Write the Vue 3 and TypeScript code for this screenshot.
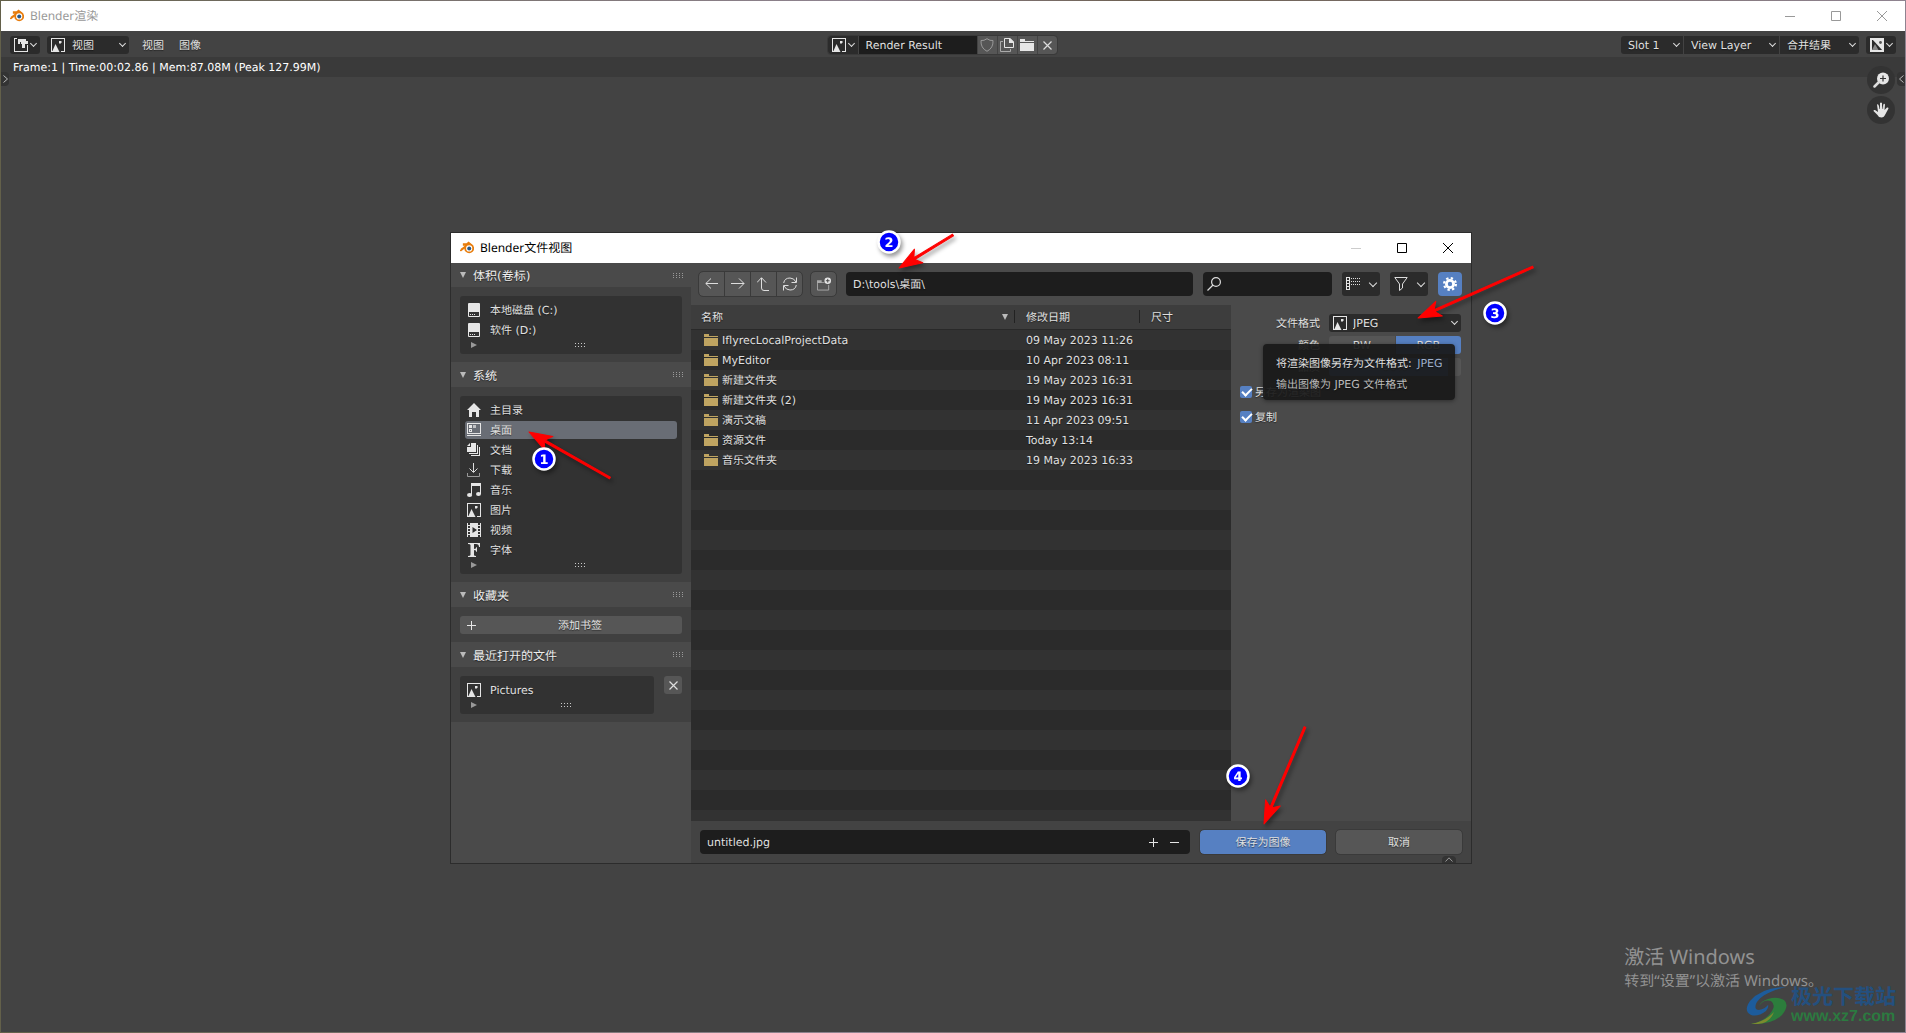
<script setup lang="ts">
import { ref } from 'vue'

const icons: Record<string, string> = {
  blender:
    '<path d="M1 8.6L7 4H3.6V3H8.4L7.6 2.2L8.6 1.4L13 5.2" fill="none" stroke="#e87d0d" stroke-width="1.5"/><path d="M.4 9.8L5 6.4" stroke="#e87d0d" stroke-width="1.6"/><circle cx="9.2" cy="7.4" r="4" fill="#fff" stroke="#e87d0d" stroke-width="1.8"/><circle cx="9.2" cy="7.4" r="2" fill="#265787"/>',
  image:
    '<path d="M0 0H14V14H10V13H13V1H1V13H2V14H0Z"/><path d="M1 14L4.5 6L8.5 14Z"/><path d="M8 3H10L11 4L9 6L8 5Z"/>',
  editor:
    '<path d="M0 0H3V1H1V13H13V7H14V14H0Z"/><path d="M4 1H12V3H14V6H11V10H8V6H7V4H6V6H4Z"/>',
  alpha:
    '<path d="M1 1H13V13H1Z" fill="none" stroke="#e6e6e6" stroke-width="2"/><path d="M2 1H13V13Z"/><path d="M2 12L5 6L8.500 12Z" fill="#888"/><circle cx="10.500" cy="4.500" r="1.400" fill="#555"/>',
  drive:
    '<path fill-rule="evenodd" d="M2 0H12Q13 0 13 1V13Q13 14 12 14H2Q1 14 1 13V1Q1 0 2 0ZM2 9V13H12V9Z"/><path d="M3 11H4V12H3ZM5 11H6V12H5ZM7 11H8V12H7Z"/>',
  home: '<path d="M7 0L14 7H12V14H9V9H5V14H2V7H0Z"/>',
  desktop:
    '<path fill-rule="evenodd" d="M0 0H14V11H0ZM1 1V10H13V1Z"/><path d="M0 12H14V13H0ZM2 2H5V5H2Z"/><path d="M6 2H9V5H6Z" opacity=".7"/><path fill-rule="evenodd" d="M2 6H5V9H2ZM3 7V8H4V7Z"/>',
  docs: '<path d="M4 0H9V9H0V4H4ZM3 0V3H0Z"/><path d="M10 2H11V11H2V10H10ZM12 4H13V13H4V12H12Z"/>',
  download:
    '<path d="M6.500 0V9M2.500 5.500L6.500 9.500L10.500 5.500" fill="none" stroke="#ddd"/><path d="M.5 10V13.500H12.500V10" fill="none" stroke="#999"/>',
  music:
    '<path d="M4 0H14V11H13V3H5V11H4Z"/><ellipse cx="2.600" cy="12" rx="2.600" ry="2"/><ellipse cx="11.500" cy="11" rx="2.500" ry="2"/>',
  video:
    '<path fill-rule="evenodd" d="M3 0H11V14H3ZM5.500 4V10L10 7Z"/><path d="M0 0H1V14H0ZM13 0H14V14H13ZM1 2H3V3H1ZM1 5H3V6H1ZM1 8H3V9H1ZM1 11H3V12H1ZM11 2H13V3H11ZM11 5H13V6H11ZM11 8H13V9H11ZM11 11H13V12H11Z"/>',
  font: '<path d="M1 0H13V4H12Q12 1 9 1H7V6Q9.500 6 9.500 4H10V9H9.500Q9.500 7 7 7V12Q7 13 9 13V14H1V13Q3.500 13 3.500 12V2Q3.500 1 1 1Z"/>',
  plus: '<path d="M4 0H5V4H9V5H5V9H4V5H0V4H4Z"/>',
  minus: '<path d="M0 4H9V5H0Z"/>',
  cross: '<path d="M.5 .5L8.500 8.500M8.500 .5L.5 8.500" fill="none" stroke="#ddd" stroke-width="1.200"/>',
  shield: '<path d="M7 .7Q10 3 13 2.500Q13.500 10 7 13.300Q.5 10 1 2.500Q4 3 7 .7Z" fill="none" stroke="#999"/>',
  copy: '<path d="M3 3.500H.5V13.500H10.500V11" fill="none" stroke="#aaa"/><path d="M4.500 .5H10L13.500 4V9.500H4.500Z" fill="none" stroke="#e6e6e6"/><path d="M9 0H10L14 4V5H9Z"/>',
  folder: '<path d="M0 1H5V3H14V4H0ZM0 5H14V13H0Z"/>',
  back: '<path d="M13 6.500H.8M6 1.500L.8 6.500L6 11.500" fill="none" stroke="#ddd"/>',
  forward: '<path d="M0 6.500H13M8 1.500L13 6.500L8 11.500" fill="none" stroke="#ddd"/>',
  up: '<path d="M4.500 1V11Q4.500 13.500 7 13.500H12M0 5.500L4.500 .7L9 5.500" fill="none" stroke="#ddd"/>',
  refresh:
    '<path d="M.7 6Q1.500 1 7 1Q11 1 13 5M13.500 .5V5.500H8.500M13.300 8Q12.500 13 7 13Q3 13 1 9M.5 13.500V8.500H5.500" fill="none" stroke="#ddd"/>',
  newfolder:
    '<path d="M0 3H5V5H8V6H0Z" fill="#aaa"/><path d="M.5 6V13.500H12.500V8" fill="none" stroke="#aaa"/><circle cx="11.500" cy="3.500" r="3.500"/><path d="M11.500 1.500V5.500M9.500 3.500H13.500" stroke="#444"/>',
  search: '<circle cx="9" cy="5" r="4.400" fill="none" stroke="#ddd" stroke-width="1.200"/><path d="M6 8L.5 13.500" stroke="#ddd" stroke-width="1.200"/>',
  list: '<path fill-rule="evenodd" d="M0 0H4V13H0ZM1 1V3H3V1ZM1 4V6H3V4ZM1 7V9H3V7ZM1 10V12H3V10Z"/><path d="M5 1.500H14M5 4.500H14M5 7.500H14" stroke="#ddd" stroke-dasharray="1 1"/>',
  filter: '<path d="M.8 .5H13.200L8.500 7V11L5.500 13.500V7Z" fill="none" stroke="#ddd"/>',
  gear: '<circle cx="7" cy="7" r="3.600" fill="none" stroke="#fff" stroke-width="2.800"/><circle cx="7" cy="7" r="5.900" fill="none" stroke="#fff" stroke-width="2.200" stroke-dasharray="2.320 2.320"/>',
  zoom: '<circle cx="10" cy="6.500" r="6"/><path d="M6 10L1.500 14.500" stroke="#ddd" stroke-width="2.500" stroke-linecap="round"/><path d="M10 3.500V9.500M7 6.500H13" stroke="#333" stroke-width="1.200"/>',
  hand: '<path d="M4 2.500Q5 2 5.500 3L7 7V1Q8 0 9 1V7L10.500 2Q11.500 1.500 12 2.500L11.500 8L14 5.500Q15.500 5 15.500 6.500L12.500 12Q11 15.500 8.500 15.500Q5.500 15.500 4.500 13L.5 9Q.5 7.500 2 8L5 10Z"/><path d="M6.500 2V7M9.700 2V7" stroke="#333" stroke-width=".5"/>',
}

const drives = ['本地磁盘 (C:)', '软件 (D:)']
const places = [
  { icon: 'home', name: '主目录' },
  { icon: 'desktop', name: '桌面' },
  { icon: 'docs', name: '文档' },
  { icon: 'download', name: '下载' },
  { icon: 'music', name: '音乐' },
  { icon: 'image', name: '图片' },
  { icon: 'video', name: '视频' },
  { icon: 'font', name: '字体' },
]
const activePlace = ref('桌面')

const files = [
  { name: 'IflyrecLocalProjectData', date: '09 May 2023 11:26' },
  { name: 'MyEditor', date: '10 Apr 2023 08:11' },
  { name: '新建文件夹', date: '19 May 2023 16:31' },
  { name: '新建文件夹 (2)', date: '19 May 2023 16:31' },
  { name: '演示文稿', date: '11 Apr 2023 09:51' },
  { name: '资源文件', date: 'Today 13:14' },
  { name: '音乐文件夹', date: '19 May 2023 16:33' },
]

const nav = [
  { icon: 'back', label: '后退' },
  { icon: 'forward', label: '前进' },
  { icon: 'up', label: '上一级' },
  { icon: 'refresh', label: '刷新' },
]

const path = ref('D:\\tools\\桌面\\')
const query = ref('')
const filename = ref('untitled.jpg')
const renderName = ref('Render Result')
const saveAsRender = ref(true)
const saveCopy = ref(true)

interface Arrow { x: number; y: number; tx: number; ty: number }
const arrows: Arrow[] = [
  { x: 529, y: 432, tx: 610, ty: 478 },
  { x: 899, y: 268, tx: 953, ty: 235 },
  { x: 1418, y: 318, tx: 1533, ty: 267 },
  { x: 1264, y: 824, tx: 1305, ty: 727 },
]
const badges = [
  { n: 1, x: 544, y: 459 },
  { n: 2, x: 889, y: 242 },
  { n: 3, x: 1495, y: 313 },
  { n: 4, x: 1238, y: 776 },
]
function arrowTransform(a: Arrow): string {
  const angle = (Math.atan2(a.ty - a.y, a.tx - a.x) * 180) / Math.PI
  return `translate(${a.x} ${a.y}) rotate(${angle})`
}
function arrowPath(a: Arrow): string {
  const len = Math.hypot(a.tx - a.x, a.ty - a.y)
  return `M0 0L23 -8L18 -1L${len} -1V1L18 1L23 8Z`
}
</script>

<template>
  <div class="screen">
    <main class="render">
      <header class="titlebar">
        <svg class="ic" viewBox="0 0 14 14" v-html="icons.blender" />
        <span class="grow">Blender渲染</span>
        <button class="win" aria-label="最小化"><svg viewBox="0 0 10 10"><path d="M0 5.500H10" /></svg></button>
        <button class="win" aria-label="最大化"><svg viewBox="0 0 10 10"><path d="M.5 .5H9.500V9.500H.5Z" /></svg></button>
        <button class="win" aria-label="关闭"><svg viewBox="0 0 10 10"><path d="M0 0L10 10M10 0L0 10" /></svg></button>
      </header>

      <div class="menubar">
        <div class="left">
          <button class="dark pick" aria-label="编辑器类型">
            <svg class="ic" viewBox="0 0 14 14" v-html="icons.editor" /><i class="chev" />
          </button>
          <div class="dark mode">
            <svg class="ic" viewBox="0 0 14 14" v-html="icons.image" />
            <select aria-label="模式"><option>视图</option></select><i class="chev" />
          </div>
          <button class="plain">视图</button>
          <button class="plain">图像</button>
        </div>
        <div class="datablock">
          <button class="dark pick" aria-label="浏览图像">
            <svg class="ic" viewBox="0 0 14 14" v-html="icons.image" /><i class="chev" />
          </button>
          <input v-model="renderName" aria-label="图像名称" />
          <button v-for="i in ['shield', 'copy', 'folder']" :key="i" class="cell" :aria-label="i">
            <svg class="ic" viewBox="0 0 14 14" v-html="icons[i]" />
          </button>
          <button class="cell" aria-label="断开"><svg class="sm" viewBox="0 0 9 9" v-html="icons.cross" /></button>
        </div>
        <div class="right">
          <div class="dark slot"><select aria-label="槽"><option>Slot 1</option></select><i class="chev" /></div>
          <div class="dark layer"><select aria-label="视图层"><option>View Layer</option></select><i class="chev" /></div>
          <div class="dark pass"><select aria-label="通道"><option>合并结果</option></select><i class="chev" /></div>
          <button class="dark pick" aria-label="显示通道">
            <svg class="ic" viewBox="0 0 14 14" v-html="icons.alpha" /><i class="chev" />
          </button>
        </div>
      </div>
      <p class="stats">Frame:1 | Time:00:02.86 | Mem:87.08M (Peak 127.99M)</p>
      <button class="tab tab-left" aria-label="展开左侧"><svg viewBox="0 0 5 8"><path d="M.5 .5L4.500 4L.5 7.500" /></svg></button>
      <button class="tab tab-right" aria-label="展开右侧"><svg viewBox="0 0 5 8"><path d="M4.500 .5L.5 4L4.500 7.500" /></svg></button>
      <div class="gizmos">
        <button aria-label="缩放"><svg viewBox="0 0 16 16" v-html="icons.zoom" /></button>
        <button aria-label="平移"><svg viewBox="0 0 16 16" v-html="icons.hand" /></button>
      </div>
    </main>

    <section class="dialog">
      <header class="titlebar active">
        <svg class="ic" viewBox="0 0 14 14" v-html="icons.blender" />
        <span class="grow">Blender文件视图</span>
        <button class="win off" aria-label="最小化" disabled><svg viewBox="0 0 10 10"><path d="M0 5.500H10" /></svg></button>
        <button class="win" aria-label="最大化"><svg viewBox="0 0 10 10"><path d="M.5 .5H9.500V9.500H.5Z" /></svg></button>
        <button class="win" aria-label="关闭"><svg viewBox="0 0 10 10"><path d="M0 0L10 10M10 0L0 10" /></svg></button>
      </header>

      <div class="body">
        <aside class="sidebar">
          <h2><i class="tri" />体积(卷标)<i class="grip" /></h2>
          <div class="panel">
            <div class="box">
              <button v-for="d in drives" :key="d" class="item">
                <svg class="ic" viewBox="0 0 14 14" v-html="icons.drive" /><span>{{ d }}</span>
              </button>
              <div class="foot"><i class="play" /><i class="grip light" /></div>
            </div>
          </div>
          <h2><i class="tri" />系统<i class="grip" /></h2>
          <div class="panel">
            <div class="box">
              <button
                v-for="p in places"
                :key="p.name"
                class="item"
                :class="{ on: p.name === activePlace }"
                @click="activePlace = p.name"
              >
                <svg class="ic" viewBox="0 0 14 14" v-html="icons[p.icon]" /><span>{{ p.name }}</span>
              </button>
              <div class="foot"><i class="play" /><i class="grip light" /></div>
            </div>
          </div>
          <h2><i class="tri" />收藏夹<i class="grip" /></h2>
          <div class="panel">
            <button class="add"><svg class="sm" viewBox="0 0 9 9" v-html="icons.plus" /><span>添加书签</span></button>
          </div>
          <h2><i class="tri" />最近打开的文件<i class="grip" /></h2>
          <div class="panel recent">
            <div class="box">
              <button class="item"><svg class="ic" viewBox="0 0 14 14" v-html="icons.image" /><span>Pictures</span></button>
              <div class="foot"><i class="play" /><i class="grip light" /></div>
            </div>
            <button class="clear" aria-label="清除"><svg class="sm" viewBox="0 0 9 9" v-html="icons.cross" /></button>
          </div>
        </aside>

        <div class="content">
          <div class="toolbar">
            <div class="nav">
              <button v-for="b in nav" :key="b.icon" :aria-label="b.label">
                <svg class="ic" viewBox="0 0 14 14" v-html="icons[b.icon]" />
              </button>
            </div>
            <button class="new" aria-label="新建文件夹"><svg class="ic" viewBox="0 0 15 14" v-html="icons.newfolder" /></button>
            <input v-model="path" class="path" aria-label="路径" />
            <label class="search">
              <svg class="ic" viewBox="0 0 14 14" v-html="icons.search" />
              <input v-model="query" aria-label="搜索" />
            </label>
            <button class="dark opt" aria-label="显示模式"><svg class="ic" viewBox="0 0 14 14" v-html="icons.list" /><i class="chev big" /></button>
            <button class="dark opt" aria-label="过滤"><svg class="ic" viewBox="0 0 14 14" v-html="icons.filter" /><i class="chev big" /></button>
            <button class="gear" aria-label="选项"><svg class="ic" viewBox="0 0 14 14" v-html="icons.gear" /></button>
          </div>

          <div class="middle">
            <div class="files">
              <table>
                <colgroup><col /><col class="c-date" /><col class="c-size" /></colgroup>
                <thead>
                  <tr><th><span>名称</span><i class="tri" /></th><th>修改日期</th><th>尺寸</th></tr>
                </thead>
                <tbody>
                  <tr v-for="f in files" :key="f.name">
                    <td><svg class="ic folder" viewBox="0 0 14 14" v-html="icons.folder" />{{ f.name }}</td>
                    <td>{{ f.date }}</td>
                    <td></td>
                  </tr>
                </tbody>
              </table>
            </div>
            <div class="props">
              <div class="row">
                <label for="fmt">文件格式</label>
                <div class="dark fmt">
                  <svg class="ic" viewBox="0 0 14 14" v-html="icons.image" />
                  <select id="fmt"><option>JPEG</option></select><i class="chev" />
                </div>
              </div>
              <div class="row">
                <span class="lab">颜色</span>
                <div class="seg"><button>BW</button><button class="on">RGB</button></div>
              </div>
              <div class="row">
                <span class="lab">品质</span>
                <div class="quality"><span>90%</span></div>
              </div>
              <div class="checks">
                <label><input v-model="saveAsRender" type="checkbox" /><span>另存为渲染图</span></label>
                <label><input v-model="saveCopy" type="checkbox" /><span>复制</span></label>
              </div>
              <div class="tip" role="tooltip">
                <p>将渲染图像另存为文件格式: <b>JPEG</b></p>
                <p class="dim">输出图像为 JPEG 文件格式</p>
              </div>
            </div>
          </div>

          <div class="actions">
            <div class="name">
              <input v-model="filename" aria-label="文件名" />
              <button aria-label="增加"><svg class="sm" viewBox="0 0 9 9" v-html="icons.plus" /></button>
              <button aria-label="减少"><svg class="sm" viewBox="0 0 9 9" v-html="icons.minus" /></button>
            </div>
            <button class="act primary">保存为图像</button>
            <button class="act">取消</button>
            <i class="fold"><svg viewBox="0 0 8 5"><path d="M.5 4.500L4 .8L7.500 4.500" /></svg></i>
          </div>
        </div>
      </div>
    </section>

    <div class="activate">
      <p class="big-line">激活 Windows</p>
      <p>转到“设置”以激活 Windows。</p>
    </div>
    <div class="site">
      <svg viewBox="0 0 42 38">
        <path d="M40 0Q16 0 4 14Q-3 24 5 28Q12 30 20 24Q23 20 22 18Q19 22 13 23Q8 23 10 17Q15 6 40 0Z" fill="#1d5c9c" />
        <path d="M13 19Q18 12 25 14Q30 18 26 24Q20 34 5 37Q26 38 36 28Q44 18 38 13Q31 9 22 12Q15 14 13 19Z" fill="#2c7d3c" />
        <path d="M5 37Q20 34 28 25Q24 36 12 37Z" fill="#7d8a2e" />
      </svg>
      <div><strong>极光下载站</strong><em>www.xz7.com</em></div>
    </div>

    <svg class="marks" aria-hidden="true">
      <g v-for="a in arrows" :key="a.x" class="arrow">
        <path :d="arrowPath(a)" :transform="arrowTransform(a)" fill="#f00" stroke="#f00" stroke-linejoin="round" />
      </g>
      <g v-for="b in badges" :key="b.n" class="arrow">
        <circle :cx="b.x" :cy="b.y" r="10.500" fill="#00f" stroke="#fff" stroke-width="2.500" />
        <text :x="b.x" :y="b.y + 5" text-anchor="middle">{{ b.n }}</text>
      </g>
    </svg>
  </div>
</template>

<style>
body {
  margin: 0;
  background: #434343;
}
</style>

<style scoped>
* {
  box-sizing: border-box;
}
.screen {
  position: relative;
  display: flex;
  min-height: 100vh;
  padding: 1px;
  overflow: hidden;
  background: linear-gradient(90deg, #63604a, #8f8390 45%, #6c5f50 60%, #8f8390);
  font: 11px/18px "DejaVu Sans", "Noto Sans CJK SC", sans-serif;
  color: #e0e0e0;
  text-rendering: geometricPrecision;
}
p,
h2 {
  margin: 0;
}
button,
input,
select {
  margin: 0;
  padding: 0;
  border: 0;
  outline: 0;
  background: none;
  color: inherit;
  font: inherit;
  text-rendering: inherit;
  text-shadow: inherit;
}
button {
  display: flex;
  align-items: center;
  justify-content: center;
}
select {
  appearance: none;
  flex: 1;
  min-width: 0;
  padding-top: 2px;
}
.ic {
  flex: none;
  width: 14px;
  height: 14px;
  fill: #e6e6e6;
}
.sm {
  flex: none;
  width: 9px;
  height: 9px;
  fill: #e6e6e6;
}
.render {
  position: relative;
  flex: 1;
  display: flex;
  flex-direction: column;
  background: #434343;
}
.titlebar {
  display: flex;
  align-items: center;
  height: 30px;
  padding-left: 9px;
  background: #fff;
  color: #999;
  font: 12px/30px "Noto Sans", "Noto Sans CJK SC", sans-serif;
}
.titlebar .ic {
  margin-right: 6px;
}
.titlebar.active {
  color: #000;
}
.grow {
  flex: 1;
}
.win {
  width: 46px;
  height: 30px;
}
.win svg {
  width: 10px;
  height: 10px;
  fill: none;
  stroke: #999;
}
.active .win svg {
  stroke: #000;
}
.active .off svg {
  stroke: #ccc;
}
.menubar {
  display: grid;
  grid-template-columns: 1fr auto 1fr;
  height: 26px;
  padding: 5px 9px 3px;
  text-shadow: 0 1px 1px rgba(0, 0, 0, 0.5);
}
.left,
.right,
.datablock {
  display: flex;
  height: 18px;
}
.right {
  justify-content: flex-end;
}
.dark {
  display: flex;
  align-items: center;
  border-radius: 3px;
  background: #2b2b2b;
}
.chev {
  flex: none;
  width: 5px;
  height: 5px;
  margin: -3px 4px 0 3px;
  border: solid #ddd;
  border-width: 0 1px 1px 0;
  transform: rotate(45deg);
}
.chev.big {
  width: 6px;
  height: 6px;
}
.pick {
  justify-content: space-between;
  width: 30px;
  padding-left: 4px;
}
.mode {
  width: 82px;
  margin: 0 13px 0 7px;
  padding-left: 4px;
}
.mode select {
  padding-left: 7px;
}
.plain {
  margin-right: 15px;
  padding-top: 2px;
}
.datablock {
  gap: 1px;
  margin-right: 22px;
  border-radius: 3px;
  outline: 1px solid #393939;
  overflow: hidden;
}
.datablock .dark {
  border-radius: 0;
}
.datablock input {
  width: 118px;
  padding: 1px 0 0 7px;
  background: #1d1d1d;
}
.cell {
  width: 19px;
  background: #565656;
}
.slot,
.layer,
.pass {
  padding-left: 7px;
}
.slot {
  width: 62px;
  margin-right: 1px;
  border-radius: 3px 0 0 3px;
}
.layer {
  width: 95px;
  margin-right: 1px;
  border-radius: 0;
}
.pass {
  width: 79px;
  margin-right: 7px;
  border-radius: 0 3px 3px 0;
}
.stats {
  height: 20px;
  padding-left: 12px;
  background: #3a3a3a;
  color: #fff;
  line-height: 22px;
}
.tab {
  position: absolute;
  top: 71px;
  width: 8px;
  height: 14px;
  background: #333;
}
.tab svg {
  width: 5px;
  height: 8px;
  fill: none;
  stroke: #bbb;
}
.tab-left {
  left: 0;
  border-radius: 0 4px 4px 0;
}
.tab-right {
  right: 0;
  border-radius: 4px 0 0 4px;
}
.gizmos {
  position: absolute;
  top: 65px;
  right: 10px;
  display: grid;
  gap: 2px;
}
.gizmos button {
  width: 28px;
  height: 28px;
  border-radius: 50%;
  background: #333;
}
.gizmos svg {
  width: 16px;
  height: 16px;
  fill: #e6e6e6;
}
.dialog {
  position: absolute;
  left: 450px;
  top: 232px;
  display: flex;
  flex-direction: column;
  width: 1022px;
  height: 632px;
  border: 1px solid #2c2c2c;
  background: #4a4a4a;
}
.body {
  flex: 1;
  display: flex;
  min-height: 0;
  text-shadow: 0 1px 1px rgba(0, 0, 0, 0.5);
}
.sidebar {
  width: 240px;
}
.sidebar h2 {
  display: flex;
  align-items: center;
  gap: 7px;
  height: 25px;
  padding: 2px 7px 0 9px;
  font-size: 12px;
  font-weight: 400;
  color: #eee;
}
.sidebar h2:first-child {
  height: 24px;
}
.tri {
  border: 3px solid transparent;
  border-top: 6px solid #bbb;
  border-bottom: 0;
}
h2 .tri,
h2 .grip {
  margin-bottom: 2px;
}
.grip {
  width: 11px;
  height: 5px;
  margin-left: auto;
  background: repeating-linear-gradient(90deg, #999 0 1px, transparent 1px 3px);
  mask: repeating-linear-gradient(#000 0 1px, transparent 1px 2px);
}
.grip.light {
  margin: 0;
  background: repeating-linear-gradient(90deg, #ccc 0 1px, transparent 1px 3px);
  mask: repeating-linear-gradient(#000 0 1px, transparent 1px 3px);
}
.panel {
  padding: 9px 9px 8px;
  background: #404040;
}
.box {
  flex: 1;
  padding: 5px;
  border-radius: 3px;
  background: #323232;
}
.item {
  justify-content: flex-start;
  gap: 9px;
  width: 100%;
  height: 18px;
  margin-bottom: 2px;
  padding-left: 2px;
  border-radius: 3px;
}
.item span,
.add span,
.checks span {
  padding-top: 2px;
}
.item.on {
  background: #696d75;
}
.foot {
  display: grid;
  grid-template-columns: 1fr auto 1fr;
  align-items: center;
  height: 8px;
  padding-left: 18px;
}
.play {
  justify-self: start;
  margin-left: -12px;
  border: 3px solid transparent;
  border-left: 6px solid #999;
  border-right: 0;
}
.add {
  gap: 9px;
  width: 100%;
  height: 18px;
  padding: 0 7px;
  border-radius: 3px;
  background: #565656;
}
.add span {
  flex: 1;
}
.recent {
  display: flex;
  gap: 10px;
}
.clear {
  width: 18px;
  height: 18px;
  border-radius: 3px;
  background: #565656;
}
.content {
  flex: 1;
  display: flex;
  flex-direction: column;
  min-width: 0;
}
.toolbar {
  display: flex;
  height: 42px;
  padding: 9px 9px 9px 8px;
}
.nav {
  display: flex;
  gap: 1px;
  margin-right: 9px;
  border-radius: 4px;
  outline: 1px solid #3a3a3a;
  background: #3a3a3a;
  overflow: hidden;
}
.nav button {
  width: 25px;
  background: #565656;
}
.new {
  width: 25px;
  margin-right: 10px;
  border-radius: 4px;
  outline: 1px solid #3a3a3a;
  background: #565656;
}
.path {
  flex: 1;
  min-width: 0;
  margin-right: 10px;
  padding: 1px 0 0 7px;
  border-radius: 4px;
  background: #1d1d1d;
}
.search {
  display: flex;
  align-items: center;
  width: 129px;
  margin-right: 10px;
  padding-left: 4px;
  border-radius: 4px;
  background: #1d1d1d;
}
.search input {
  flex: 1;
  min-width: 0;
}
.opt {
  justify-content: space-between;
  width: 38px;
  margin-right: 10px;
  padding-left: 4px;
}
.gear {
  width: 24px;
  border-radius: 4px;
  background: #5680c2;
}
.middle {
  flex: 1;
  display: flex;
  min-height: 0;
}
.files {
  flex: 1;
  background: repeating-linear-gradient(#323232 0 20px, #2b2b2b 20px 40px) 0 25px;
  overflow: hidden;
}
table {
  width: 100%;
  border-collapse: collapse;
  table-layout: fixed;
}
.c-date {
  width: 125px;
}
.c-size {
  width: 91px;
}
thead {
  background: #3d3d3d;
  box-shadow: inset 0 -1px #292929;
}
th {
  position: relative;
  height: 25px;
  padding: 0 10px 0 11px;
  font-weight: 400;
  text-align: left;
}
th:first-child {
  padding-left: 10px;
}
th + th::before {
  content: "";
  position: absolute;
  left: -1px;
  top: 5px;
  width: 1px;
  height: 13px;
  background: #222;
}
th .tri {
  float: right;
  margin: 5px -3px 0 0;
}
td {
  height: 20px;
  padding: 2px 0 0 11px;
}
td:first-child {
  padding-left: 13px;
}
.folder {
  margin-right: 4px;
  fill: #bfa461;
  vertical-align: -3px;
}
.props {
  position: relative;
  width: 240px;
  padding: 9px 10px 0 9px;
}
.row {
  display: flex;
  align-items: center;
  gap: 9px;
  height: 18px;
  margin-bottom: 4px;
}
.row > :first-child {
  flex: 1;
  padding-top: 2px;
  text-align: right;
}
.fmt,
.seg,
.quality {
  width: 132px;
  height: 18px;
}
.fmt {
  padding-left: 4px;
}
.fmt select {
  padding-left: 6px;
}
.seg {
  display: flex;
  gap: 1px;
  border-radius: 3px;
  overflow: hidden;
}
.seg button {
  flex: 1;
  padding-top: 1px;
  background: #565656;
}
.seg .on {
  background: #5680c2;
}
.quality {
  border-radius: 3px;
  background: linear-gradient(90deg, #5680c2 90%, #565656 90%);
  text-align: center;
}
.checks {
  display: grid;
  gap: 7px;
  margin-top: 7px;
}
.checks label {
  display: flex;
  align-items: center;
  gap: 3px;
  height: 18px;
}
.checks input {
  appearance: none;
  width: 12px;
  height: 12px;
  border-radius: 2px;
  background: #5680c2;
}
.checks input:checked::before {
  content: "";
  display: block;
  width: 8px;
  height: 4px;
  margin: 2px 0 0 2px;
  border: solid #fff;
  border-width: 0 0 2px 2px;
  transform: rotate(-45deg);
}
.tip {
  position: absolute;
  left: 32px;
  top: 39px;
  width: 192px;
  height: 56px;
  padding: 9px 0 0 13px;
  border-radius: 4px;
  background: rgba(25, 25, 25, 0.93);
  box-shadow: 0 1px 4px rgba(0, 0, 0, 0.4);
  line-height: 21px;
  white-space: nowrap;
}
.tip b {
  margin-left: 2px;
  color: #9fb0cc;
  font-weight: 400;
}
.tip .dim {
  color: #bbb;
}
.actions {
  position: relative;
  display: flex;
  height: 42px;
  padding: 9px;
  background: #434343;
}
.name {
  flex: 1;
  display: flex;
  margin-right: 10px;
  padding: 0 5px 0 7px;
  border-radius: 4px;
  background: #1d1d1d;
}
.name input {
  flex: 1;
  padding-top: 1px;
}
.name button {
  width: 21px;
}
.act {
  width: 126px;
  padding-top: 1px;
  border-radius: 4px;
  outline: 1px solid #3a3a3a;
  background: #565656;
}
.primary {
  margin-right: 10px;
  background: #5680c2;
}
.fold {
  position: absolute;
  right: 15px;
  bottom: 0;
  display: flex;
  align-items: center;
  justify-content: center;
  width: 14px;
  height: 7px;
  border-radius: 4px 4px 0 0;
  background: #333;
}
.fold svg {
  width: 8px;
  height: 5px;
  fill: none;
  stroke: #999;
}
.activate {
  position: absolute;
  right: 83px;
  bottom: 42px;
  color: #929292;
  font: 15px/20px "Noto Sans", "Noto Sans CJK SC", sans-serif;
  white-space: nowrap;
}
.big-line {
  font-size: 20px;
  line-height: 28px;
}
.site {
  position: absolute;
  right: 10px;
  bottom: 6px;
  display: flex;
  gap: 3px;
}
.site svg {
  width: 42px;
  height: 38px;
  margin-top: 2px;
}
.site strong,
.site em {
  display: block;
  font: 700 21px/22px "Noto Sans CJK SC", sans-serif;
  color: #24507f;
}
.site em {
  font: 700 16px/20px "Liberation Sans", sans-serif;
  color: #2c7a40;
}
.marks {
  position: absolute;
  left: 0;
  top: 0;
  width: 100%;
  height: 100%;
  pointer-events: none;
}
.marks text {
  fill: #fff;
  font: 700 13px "DejaVu Sans", sans-serif;
}
.arrow {
  filter: drop-shadow(2px 3px 2px rgba(0, 0, 0, 0.4));
}
</style>
